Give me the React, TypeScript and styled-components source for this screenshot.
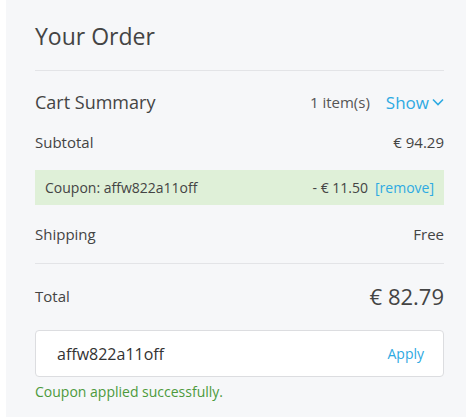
import styled, { createGlobalStyle } from "styled-components";

const GlobalStyle = createGlobalStyle`
  body {
    margin: 0;
    background: #ffffff;
    font-family: "Open Sans", "Noto Sans", sans-serif;
  }
`;

const Panel = styled.div`
  margin-left: 6px;
  width: 460px;
  height: 417px;
  box-sizing: border-box;
  background: #f6f7f9;
  padding: 20px 22px 0 29px;
  color: #444;
`;

const Title = styled.h2`
  margin: 0;
  font-size: 23px;
  font-weight: 400;
  line-height: 32px;
  padding-bottom: 18px;
  border-bottom: 1px solid #e3e4e7;
`;

const Row = styled.div<{ $h: number; $size?: number }>`
  display: flex;
  align-items: center;
  justify-content: space-between;
  height: ${(p) => p.$h}px;
  font-size: ${(p) => p.$size ?? 15}px;
`;

const Right = styled.div`
  display: flex;
  align-items: center;
  gap: 16px;
`;

const Count = styled.span`
  font-size: 15px;
  color: #555;
`;

const Link = styled.span<{ $size?: number }>`
  color: #2eaae2;
  display: inline-flex;
  align-items: center;
  gap: 3px;
  ${(p) => (p.$size ? `font-size: ${p.$size}px;` : "")}
`;

const CouponBand = styled.div`
  display: flex;
  align-items: center;
  justify-content: space-between;
  height: 35px;
  margin-top: 19px;
  padding: 0 10px;
  background: #dff0d8;
  font-size: 14px;
`;

const Discount = styled.div`
  display: flex;
  gap: 7px;
  align-items: center;
`;

const Divider = styled.div`
  height: 1px;
  background: #e3e4e7;
`;

const Big = styled.span`
  font-size: 22px;
`;

const CouponInput = styled.div`
  display: flex;
  align-items: center;
  justify-content: space-between;
  height: 47px;
  margin-top: 2px;
  box-sizing: border-box;
  border: 1px solid #dcdde0;
  border-radius: 4px;
  background: #fff;
  padding: 0 19px 0 21px;
  font-size: 16px;
  color: #333;
`;

const Applied = styled.div`
  margin-top: 5px;
  font-size: 14px;
  color: #4c9a3c;
`;

export default function App() {
  return (
    <>
      <GlobalStyle />
      <Panel>
        <Title>Your Order</Title>
        <Row $h={62} $size={18}>
          <span>Cart Summary</span>
          <Right>
            <Count>1 item(s)</Count>
            <Link $size={17}>
              Show
              <svg width="12" height="8" viewBox="0 0 12 8" fill="none">
                <path d="M1 1.5l5 5 5-5" stroke="#2eaae2" strokeWidth="1.6" />
              </svg>
            </Link>
          </Right>
        </Row>
        <Row $h={18}>
          <span>Subtotal</span>
          <span>€ 94.29</span>
        </Row>
        <CouponBand>
          <span>Coupon: affw822a11off</span>
          <Discount>
            <span>- € 11.50</span>
            <Link>[remove]</Link>
          </Discount>
        </CouponBand>
        <Row $h={58}>
          <span>Shipping</span>
          <span>Free</span>
        </Row>
        <Divider />
        <Row $h={64}>
          <span>Total</span>
          <Big>€ 82.79</Big>
        </Row>
        <CouponInput>
          <span>affw822a11off</span>
          <Link $size={14}>Apply</Link>
        </CouponInput>
        <Applied>Coupon applied successfully.</Applied>
      </Panel>
    </>
  );
}
